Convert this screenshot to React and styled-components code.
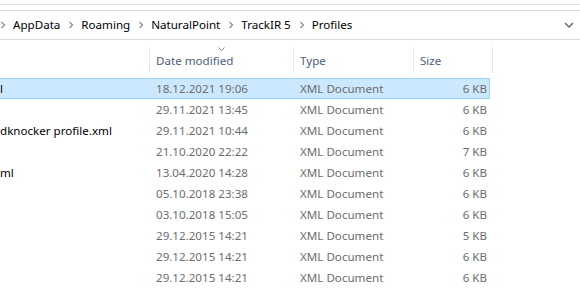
import React from "react";
import styled, { createGlobalStyle } from "styled-components";

const Global = createGlobalStyle`
  html, body { margin: 0; padding: 0; background: #fff; }
  body { font-family: "Noto Sans", "Segoe UI", sans-serif; font-size: 11.6px; }
`;

const Page = styled.div`
  width: 580px;
  height: 305px;
  overflow: hidden;
  background: #fff;
`;

const RibbonEdge = styled.div`
  height: 4px;
  border-bottom: 1px solid #e3e3e3;
`;

const AddressBar = styled.div`
  margin-top: 5px;
  height: 28px;
  border-top: 1px solid #d9d9d9;
  border-bottom: 1px solid #d9d9d9;
  display: flex;
  align-items: center;
`;

const Crumbs = styled.div`
  flex: 1;
  display: flex;
  align-items: center;
`;

const Crumb = styled.span`
  color: #000;
  white-space: nowrap;
  padding: 0 8px 0 7px;
  line-height: 28px;
`;

const Sep = styled.svg`
  width: 6px;
  height: 8px;
  display: block;
`;

const DropBtn = styled.svg`
  width: 10px;
  height: 8px;
  margin-right: 6px;
  display: block;
`;

const Header = styled.div`
  display: grid;
  grid-template-columns: 149px 144px 120px 80px;
  height: 38px;
`;

const HeadCell = styled.div`
  position: relative;
  display: flex;
  align-items: center;
  padding-left: ${(p) => (p.$first ? 0 : 7)}px;
  padding-top: 2px;
  color: #4c607a;
  &::before {
    content: "";
    position: absolute;
    left: 0;
    top: 7px;
    height: 26px;
    width: 1px;
    background: ${(p) => (p.$first ? "transparent" : "#e5e5e5")};
  }
  &:last-child::after {
    content: "";
    position: absolute;
    right: 0;
    top: 7px;
    height: 26px;
    width: 1px;
    background: #e5e5e5;
  }
`;

const SortArrow = styled.svg`
  position: absolute;
  left: 69px;
  top: 7px;
  width: 7px;
  height: 4px;
`;

const Rows = styled.div``;

const Row = styled.div`
  display: grid;
  grid-template-columns: 149px 144px 120px 77px;
  width: 490px;
  height: 21px;
  box-sizing: border-box;
  align-items: center;
  background: ${(p) => (p.$selected ? "#cce8ff" : "transparent")};
  border: 1px solid ${(p) => (p.$selected ? "#99d1ff" : "transparent")};
  border-left: 0;
`;

const Cell = styled.div`
  white-space: nowrap;
  overflow: hidden;
  color: ${(p) => (p.$name ? "#000" : "#6d6d6d")};
  padding-left: ${(p) => (p.$name ? 0 : 7)}px;
  text-align: ${(p) => (p.$right ? "right" : "left")};
  padding-right: ${(p) => (p.$right ? 3 : 0)}px;
  line-height: 19px;
`;

const crumbs = ["AppData", "Roaming", "NaturalPoint", "TrackIR 5", "Profiles"];

const rows = [
  ["l", "18.12.2021 19:06", "6 KB", true],
  ["", "29.11.2021 13:45", "6 KB"],
  ["dknocker profile.xml", "29.11.2021 10:44", "6 KB"],
  ["", "21.10.2020 22:22", "7 KB"],
  ["ml", "13.04.2020 14:28", "6 KB"],
  ["", "05.10.2018 23:38", "6 KB"],
  ["", "03.10.2018 15:05", "6 KB"],
  ["", "29.12.2015 14:21", "5 KB"],
  ["", "29.12.2015 14:21", "6 KB"],
  ["", "29.12.2015 14:21", "6 KB"],
];

const Chevron = () => (
  <Sep viewBox="0 0 6 8">
    <path d="M1.5 1 L4.5 4 L1.5 7" fill="none" stroke="#8a8a8a" strokeWidth="1.2" />
  </Sep>
);

export default function App() {
  return (
    <Page>
      <Global />
      <RibbonEdge />
      <AddressBar>
        <Crumbs>
          {crumbs.map((c) => (
            <React.Fragment key={c}>
              <Chevron />
              <Crumb>{c}</Crumb>
            </React.Fragment>
          ))}
        </Crumbs>
        <DropBtn viewBox="0 0 10 8">
          <path d="M1 2 L5 6 L9 2" fill="none" stroke="#6a6a6a" strokeWidth="1.5" />
        </DropBtn>
      </AddressBar>
      <Header>
        <HeadCell $first />
        <HeadCell>
          <SortArrow viewBox="0 0 7 4">
            <path d="M0.5 0.5 L3.5 3.5 L6.5 0.5" fill="none" stroke="#8a8a8a" strokeWidth="1" />
          </SortArrow>
          Date modified
        </HeadCell>
        <HeadCell>Type</HeadCell>
        <HeadCell>Size</HeadCell>
      </Header>
      <Rows>
        {rows.map(([name, date, size, sel], i) => (
          <Row key={i} $selected={sel}>
            <Cell $name>{name}</Cell>
            <Cell>{date}</Cell>
            <Cell>XML Document</Cell>
            <Cell $right>{size}</Cell>
          </Row>
        ))}
      </Rows>
    </Page>
  );
}
